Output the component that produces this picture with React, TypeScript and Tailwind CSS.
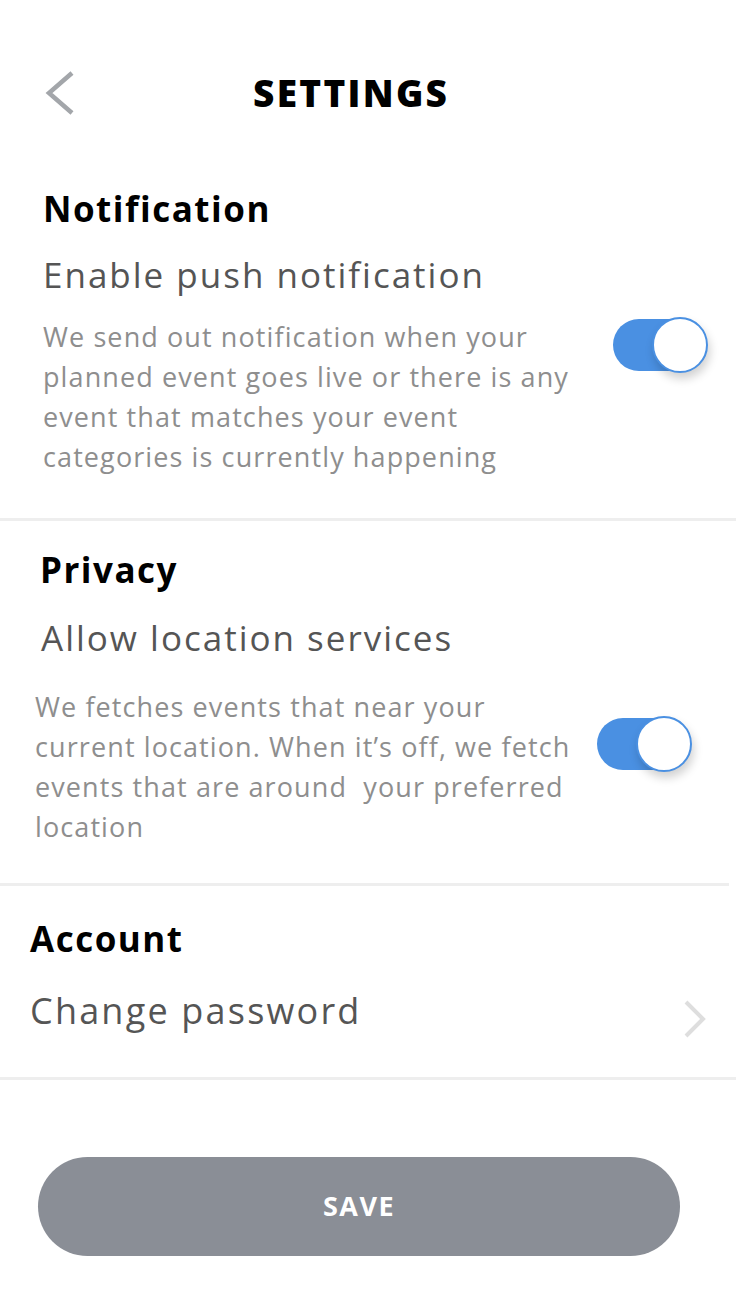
import React from 'react';

const Toggle: React.FC = () => (
  <div className="relative w-[95px] h-[56px] shrink-0">
    <div className="absolute inset-y-[2px] left-0 right-[2px] rounded-full bg-[#4a90e2]" />
    <div className="absolute right-0 top-0 w-[56px] h-[56px] rounded-full bg-white border-[2px] border-[#4a90e2] shadow-[2px_6px_10px_rgba(0,0,0,0.18)]" />
  </div>
);

const Divider: React.FC<{ inset?: string }> = ({ inset = '' }) => (
  <div className={`h-[3px] bg-[#eeeeee] ${inset}`} />
);

const App: React.FC = () => {
  return (
    <div className="w-full bg-white pb-[40px] font-['Open_Sans',sans-serif]">
      {/* Header */}
      <div className="flex items-center h-[42px] pt-0 mt-[72px] pl-[45px]">
        <svg width="30" height="44" viewBox="0 0 30 44" fill="none">
          <polyline points="27,2 4,22 27,42" stroke="#a3a6aa" strokeWidth="4.5" />
        </svg>
        <h1 className="ml-[178px] text-[37px] leading-[42px] font-extrabold tracking-[2.3px] text-black">
          SETTINGS
        </h1>
      </div>

      {/* Notification */}
      <div className="pl-[43px] pr-[28px] pt-[75px] pb-[41px]">
        <h2 className="text-[35px] leading-[40px] font-bold tracking-[1.5px] text-black">Notification</h2>
        <p className="mt-[24px] text-[35px] leading-[44px] tracking-[2px] text-[#555555]">Enable push notification</p>
        <div className="mt-[20px] flex items-start justify-between">
          <p className="text-[27px] leading-[40px] tracking-[1.1px] text-[#8e8e8e] whitespace-nowrap">
            We send out notification when your<br />
            planned event goes live or there is any<br />
            event that matches your event<br />
            categories is currently happening
          </p>
          <Toggle />
        </div>
      </div>

      <Divider />

      {/* Privacy */}
      <div className="pl-[35px] pr-[44px] pt-[29px] pb-[36px]">
        <h2 className="ml-[5px] text-[35px] leading-[40px] font-bold tracking-[1.5px] text-black">Privacy</h2>
        <p className="ml-[6px] mt-[26px] text-[35px] leading-[44px] tracking-[2px] text-[#555555]">Allow location services</p>
        <div className="mt-[27px] flex items-start justify-between">
          <p className="text-[27px] leading-[40px] tracking-[1.1px] text-[#8e8e8e] whitespace-pre">
            We fetches events that near your{'\n'}
            current location. When it’s off, we fetch{'\n'}
            events that are around  your preferred{'\n'}
            location
          </p>
          <div className="mt-[29px]">
            <Toggle />
          </div>
        </div>
      </div>

      <Divider inset="mr-[7px]" />

      {/* Account */}
      <div className="pl-[30px] pr-[29px] pt-[33px] pb-[42px]">
        <h2 className="text-[35px] leading-[40px] font-bold tracking-[1.5px] text-black">Account</h2>
        <div className="mt-[28px] flex items-center justify-between h-[48px]">
          <p className="text-[36px] leading-[48px] tracking-[2.2px] text-[#555555]">Change password</p>
          <svg width="24" height="38" viewBox="0 0 24 38" fill="none" className="mt-[16px]">
            <polyline points="3,2 20,19 3,36" stroke="#dedede" strokeWidth="4" />
          </svg>
        </div>
      </div>

      <Divider />

      {/* Save */}
      <div className="pl-[38px] pr-[56px] pt-[77px]">
        <button className="w-full h-[99px] rounded-full bg-[#8a8e96] text-white text-[27px] font-bold tracking-[1.5px]">
          SAVE
        </button>
      </div>
    </div>
  );
};

export default App;
